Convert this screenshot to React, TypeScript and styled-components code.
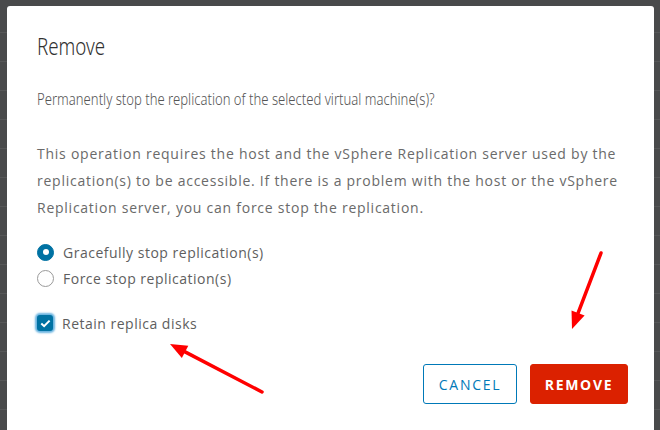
import styled, { createGlobalStyle } from "styled-components";

const Global = createGlobalStyle`
  html, body {
    margin: 0;
    padding: 0;
    height: 100%;
    overflow: hidden;
  }
  body {
    background: #4a4a4a;
    font-family: "Open Sans", "Liberation Sans", sans-serif;
  }
`;

const Page = styled.div`
  position: relative;
  width: 660px;
  height: 430px;
  overflow: hidden;
  background-color: #494a4b;
  background-image: repeating-linear-gradient(
    to bottom,
    transparent 0,
    transparent 28px,
    #565758 28px,
    #565758 29px
  );
  background-position: 0 4px;
  padding: 6px 6px 0 7px;
  box-sizing: border-box;
`;

const Dialog = styled.div`
  background: #fff;
  border-radius: 3px 3px 0 0;
  height: 440px;
  padding: 24px 26px 0 30px;
  box-sizing: border-box;
  color: #565656;
`;

// the header font is a narrow geometric face, squeeze Noto Sans to its width
const Title = styled.h3`
  margin: 0;
  font-family: "Noto Sans", "Open Sans", sans-serif;
  font-weight: 300;
  font-size: 24px;
  line-height: 32px;
  color: #313131;
  transform: scaleX(0.78);
  transform-origin: left center;
`;

const Question = styled.p`
  margin: 27px 0 0;
  font-family: "Noto Sans", "Open Sans", sans-serif;
  font-weight: 300;
  font-size: 17px;
  line-height: 20px;
  color: #555;
  white-space: nowrap;
  transform: scaleX(0.77);
  transform-origin: left center;
`;

const Note = styled.p`
  margin: 31px 0 0;
  font-size: 14px;
  line-height: 27px;
  letter-spacing: 0.75px;
  color: #6a6a6a;
  white-space: nowrap;
`;

const Options = styled.div`
  display: flex;
  flex-direction: column;
  margin-top: 18px;
`;

const Row = styled.label<{ $gap?: number }>`
  display: flex;
  align-items: center;
  gap: 9px;
  height: 26px;
  margin-top: ${(p) => p.$gap ?? 0}px;
  font-size: 14px;
  letter-spacing: 0.5px;
  color: #5e5e5e;
`;

const Radio = styled.span<{ $on?: boolean }>`
  width: 17px;
  height: 17px;
  border-radius: 50%;
  box-sizing: border-box;
  background: ${(p) => (p.$on ? "#0072a3" : "#fff")};
  border: 1px solid ${(p) => (p.$on ? "#0072a3" : "#9a9a9a")};
  display: flex;
  align-items: center;
  justify-content: center;
  &::after {
    content: "";
    width: 6px;
    height: 6px;
    border-radius: 50%;
    background: ${(p) => (p.$on ? "#fff" : "transparent")};
  }
`;

const Check = styled.span`
  width: 16px;
  height: 16px;
  border-radius: 3px;
  background: #0072a3;
  box-shadow: 0 0 2px 2px #6ab4e0;
  display: flex;
  align-items: center;
  justify-content: center;
`;

const Footer = styled.div`
  display: flex;
  justify-content: flex-end;
  gap: 13px;
  margin-top: 28px;
`;

const Button = styled.button<{ $primary?: boolean }>`
  height: 40px;
  width: ${(p) => (p.$primary ? 98 : 94)}px;
  padding: 0;
  border-radius: 3px;
  font-family: "Open Sans", "Liberation Sans", sans-serif;
  font-size: 14px;
  font-weight: ${(p) => (p.$primary ? 700 : 500)};
  letter-spacing: 1.7px;
  text-transform: uppercase;
  cursor: pointer;
  border: 1px solid ${(p) => (p.$primary ? "#db2100" : "#0079b8")};
  background: ${(p) => (p.$primary ? "#db2100" : "#fff")};
  color: ${(p) => (p.$primary ? "#fff" : "#0079b8")};
`;

const Annotations = styled.svg`
  position: absolute;
  left: 0;
  top: 0;
  pointer-events: none;
`;

const Arrow = ({ x1, y1, x2, y2 }: { x1: number; y1: number; x2: number; y2: number }) => {
  const a = Math.atan2(y2 - y1, x2 - x1);
  const len = 17;
  const w = 7;
  const bx = x2 - Math.cos(a) * len;
  const by = y2 - Math.sin(a) * len;
  const px = -Math.sin(a) * w;
  const py = Math.cos(a) * w;
  return (
    <g>
      <line x1={x1} y1={y1} x2={bx} y2={by} stroke="#f00" strokeWidth={3.5} strokeLinecap="round" />
      <polygon points={`${x2},${y2} ${bx + px},${by + py} ${bx - px},${by - py}`} fill="#f00" />
    </g>
  );
};

const App = () => {
  return (
    <Page>
      <Global />
      <Dialog>
        <Title>Remove</Title>
        <Question>Permanently stop the replication of the selected virtual machine(s)?</Question>
        <Note>
          This operation requires the host and the vSphere Replication server used by the
          <br />
          replication(s) to be accessible. If there is a problem with the host or the vSphere
          <br />
          Replication server, you can force stop the replication.
        </Note>
        <Options>
          <Row>
            <Radio $on />
            Gracefully stop replication(s)
          </Row>
          <Row>
            <Radio />
            Force stop replication(s)
          </Row>
          <Row $gap={19}>
            <Check>
              <svg width="11" height="9" viewBox="0 0 11 9">
                <path d="M1.3 4.6 L4.1 7.2 L9.6 1.6" fill="none" stroke="#fff" strokeWidth="2" />
              </svg>
            </Check>
            Retain replica disks
          </Row>
        </Options>
        <Footer>
          <Button>Cancel</Button>
          <Button $primary>Remove</Button>
        </Footer>
      </Dialog>
      <Annotations width="660" height="430">
        <Arrow x1={601} y1={253} x2={572} y2={329} />
        <Arrow x1={262} y1={392} x2={170} y2={344} />
      </Annotations>
    </Page>
  );
};

export default App;
